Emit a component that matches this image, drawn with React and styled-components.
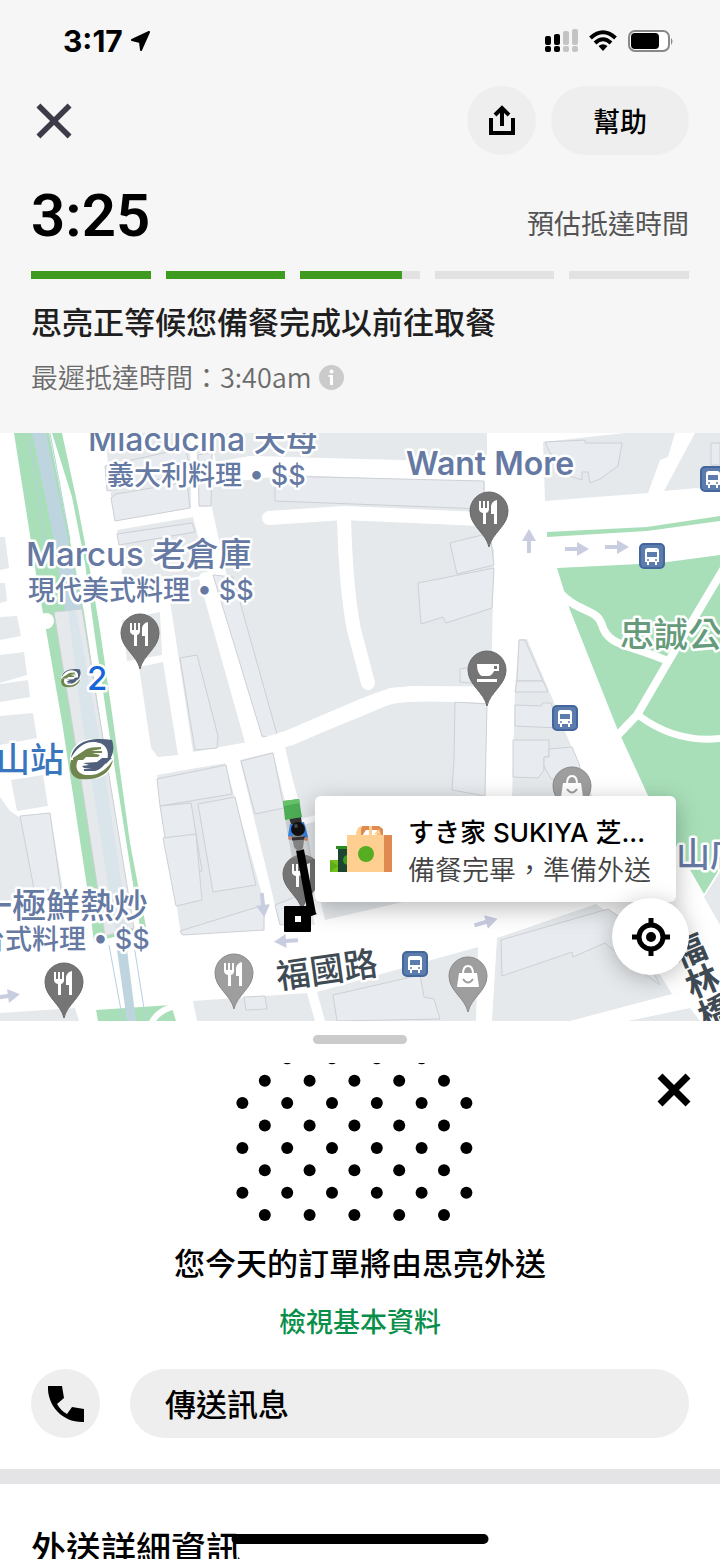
import React from "react";
import styled, { createGlobalStyle } from "styled-components";

const COLORS = {
  HEADER_BG: "#f6f6f6",
  PILL: "#eeeeee",
  TRACK: "#e2e2e2",
  PROGRESS: "#3d9b1f",
  LINK: "#0a8f4a",
  MUTED: "#6b6b6b",
  BLOCK: "#e5e9ec",
  BUILDING_LINE: "#cdd0d5",
  PARK: "#a8dfb8",
  RIVER: "#bed5df",
  PLACE: "#6579a3",
  ARROW: "#c9cde0"
};

const CJK = `"Noto Sans CJK TC", sans-serif`;
const LATIN = `Inter, "Noto Sans CJK TC", sans-serif`;

const GlobalStyle = createGlobalStyle`
  * {
    box-sizing: border-box;
  }

  body {
    margin: 0;
    background: #fff;
    font-family: ${CJK};
    color: #000;
  }

  h1, h2, p {
    margin: 0;
  }

  button {
    border: 0;
    padding: 0;
    font: inherit;
    color: inherit;
    cursor: pointer;
  }
`;

const Screen = styled.div`
  position: relative;
  display: flex;
  flex-direction: column;
  height: 100vh;
  overflow: hidden;
`;

const Header = styled.header`
  flex: none;
  padding: 0 31px 36px;
  background: ${COLORS.HEADER_BG};
`;

const StatusBar = styled.div`
  display: flex;
  justify-content: space-between;
  align-items: center;
  height: 82px;
  padding: 0 14px 0 32px;
`;

const StatusGroup = styled.div`
  display: flex;
  align-items: center;
  gap: ${props => props.$gap}px;
`;

const Clock = styled.span`
  font: 700 30px/32px ${LATIN};
`;

const Toolbar = styled.div`
  display: flex;
  align-items: center;
  gap: 15px;
  padding-top: 4px;
`;

const IconButton = styled.button`
  display: flex;
  align-items: center;
  justify-content: center;
  background: none;
`;

const CloseButton = styled(IconButton)`
  width: 46px;
  height: 46px;
  margin-right: auto;
`;

const RoundButton = styled(IconButton)`
  flex: none;
  width: 69px;
  height: 69px;
  border-radius: 50%;
  background: ${COLORS.PILL};
`;

const HelpButton = styled.button`
  height: 69px;
  padding: 0 42px;
  border-radius: 35px;
  background: ${COLORS.PILL};
  font-size: 27px;
  font-weight: 500;
`;

const EtaRow = styled.div`
  display: flex;
  justify-content: space-between;
  align-items: flex-end;
  padding: 28px 0 22px;
`;

const Eta = styled.h1`
  font: 600 60px/66px Roboto, sans-serif;
`;

const EtaLabel = styled.span`
  padding-bottom: 6px;
  font-size: 27px;
  line-height: 40px;
  color: #545454;
`;

const Steps = styled.div`
  display: flex;
  gap: 15px;
`;

const Step = styled.div`
  flex: 1;
  height: 8px;
  background: ${COLORS.TRACK};
`;

const StepFill = styled.div`
  height: 100%;
  background: ${COLORS.PROGRESS};
`;

const Headline = styled.h2`
  margin-top: 20px;
  font-size: 31px;
  line-height: 44px;
  font-weight: 500;
  color: #1f1f1f;
`;

const Latest = styled.p`
  display: flex;
  align-items: center;
  gap: 7px;
  margin-top: 14px;
  font-size: 27px;
  line-height: 40px;
  font-weight: 350;
  color: ${COLORS.MUTED};
`;

const MapArea = styled.section`
  position: relative;
  flex: none;
  aspect-ratio: 720 / 588;
  overflow: hidden;

  > svg {
    display: block;
    width: 100%;
    height: 100%;
  }
`;

const MapLabel = styled.text`
  font-family: ${LATIN};
  font-weight: ${props => props.$weight || 500};
  font-size: ${props => props.$size || 27}px;
  fill: ${props => props.$color || COLORS.PLACE};
  stroke: #fff;
  stroke-width: 5px;
  stroke-linejoin: round;
  paint-order: stroke;
  writing-mode: ${props => (props.$vertical ? "vertical-rl" : "horizontal-tb")};
`;

const StoreCard = styled.div`
  position: absolute;
  right: 44px;
  bottom: 119px;
  display: flex;
  align-items: center;
  gap: 16px;
  height: 106px;
  padding: 0 25px 0 15px;
  border-radius: 6px;
  background: #fff;
  box-shadow: 0 6px 24px rgba(0, 0, 0, 0.28);
`;

const StoreText = styled.div`
  padding-top: 3px;
`;

const StoreName = styled.h2`
  font: 500 26px/36px Inter, "Noto Sans CJK JP", sans-serif;
`;

const StoreStatus = styled.p`
  font-size: 27px;
  line-height: 36px;
  font-weight: 350;
  color: #444;
`;

const LocateButton = styled(IconButton)`
  position: absolute;
  right: 31px;
  bottom: 46px;
  width: 77px;
  height: 77px;
  border-radius: 50%;
  background: #fff;
  box-shadow: 0 4px 22px rgba(0, 0, 0, 0.25);
`;

const Sheet = styled.main`
  flex: 1;
  min-height: 0;
  overflow: hidden;
  background: #fff;
`;

const Handle = styled.div`
  width: 94px;
  height: 9px;
  margin: 14px auto 0;
  border-radius: 5px;
  background: #cbcbcb;
`;

const CourierTop = styled.div`
  display: grid;
  grid-template-columns: 1fr auto 1fr;
  align-items: start;
  margin-top: 19px;
  padding: 0 28px;
`;

const DismissButton = styled(IconButton)`
  grid-column: 3;
  justify-self: end;
  width: 36px;
  height: 36px;
  margin-top: 9px;
`;

const Dots = styled.svg`
  grid-column: 2;
  width: 248px;
  height: 159px;
`;

const CourierText = styled.div`
  display: flex;
  flex-direction: column;
  align-items: center;
  gap: 17px;
  padding-top: 18px;
`;

const CourierName = styled.h2`
  font-size: 31px;
  line-height: 44px;
  font-weight: 500;
`;

const ProfileLink = styled.a`
  font-size: 27px;
  line-height: 40px;
  font-weight: 500;
  color: ${COLORS.LINK};
  text-decoration: none;
`;

const Contact = styled.div`
  display: flex;
  gap: 30px;
  padding: 28px 31px 31px;
`;

const MessageButton = styled.button`
  flex: 1;
  height: 69px;
  padding: 0 35px 2px;
  border-radius: 35px;
  background: ${COLORS.PILL};
  font-size: 31px;
  font-weight: 500;
  text-align: left;
`;

const Details = styled.section`
  padding: 37px 31px;
  border-top: 15px solid #e4e4e6;

  h2 {
    font-size: 35px;
    line-height: 52px;
    font-weight: 500;
  }
`;

const HomeIndicator = styled.div`
  position: absolute;
  left: 50%;
  bottom: 15px;
  width: 257px;
  height: 10px;
  border-radius: 5px;
  background: #000;
  transform: translateX(-50%);
`;

const steps = [100, 100, 85, 0, 0];

const blocks = [
  "0,537 5,537 9,568 0,570",
  "0,583 5,583 7,601 0,603",
  "0,617 17,616 21,636 0,640",
  "0,655 24,652 27,675 0,683",
  "0,684 28,680 30,697 0,702",
  "0,716 33,713 37,738 0,745",
  "11,780 43,775 48,806 17,811",
  "0,797 10,811 19,817 50,813 63,890 33,893 0,905",
  "0,1013 75,1008 79,1021 0,1021",
  "105,433 190,433 191,508 115,521 111,496",
  "196,442 213,450 211,506 199,507",
  "117,530 193,517 208,575 150,585 124,588",
  "122,620 160,612 162,655 127,661",
  "139,667 163,662 178,755 158,757 151,748",
  "168,588 205,577 248,742 193,752",
  "157,775 225,763 265,905 264,930 181,935",
  "240,760 273,752 315,925 279,922",
  "285,747 360,717 393,703 427,701 486,703 484,800 484,880 403,902 325,920",
  "209,433 487,433 487,462 360,459 250,456 216,462",
  "207,485 290,475 485,482 484,530 494,550 491,687 413,686 390,688 360,699 285,731 262,738",
  "543,442 625,433 675,433 668,457 660,460 648,493 545,501",
  "695,433 720,433 720,486 664,491",
  "519,639 527,639 553,700 566,734 580,766 594,800 512,800 515,690",
  "704,897 720,872 720,925",
  "497,938 596,904 632,930 672,994 570,1021 492,1021",
  "317,992 478,947 476,1021 325,1021",
  "193,1001 307,993 315,1021 197,1021",
  "628,1021 690,1008 700,1021"
];

const buildings = [
  "111,498 116,494 187,482 190,508 115,521",
  "117,534 192,523 195,532 119,545",
  "105,466 186,448 190,472 107,491",
  "198,455 212,452 211,506 199,506",
  "275,476 484,481 484,509 275,501",
  "450,543 490,533 494,565 457,574",
  "418,583 494,568 492,608 446,623 443,617 421,624",
  "460,669 485,665 485,684 460,682",
  "455,702 487,704 485,796 452,790 454,760",
  "545,442 585,440 585,443 622,443 618,466 600,479 590,483 588,472 582,472 582,480 560,473",
  "711,443 720,443 720,465 711,465",
  "519,640 525,640 543,681 517,681",
  "517,681 543,681 548,692 515,692",
  "515,705 541,706 543,703 551,703 560,728 515,726",
  "513,740 549,740 549,757 544,757 544,770 538,778 513,777",
  "549,749 572,747 580,766 575,780 551,779 544,766 544,757 549,757",
  "180,658 197,655 218,736 217,748 195,750",
  "213,575 233,577 278,738 262,736",
  "157,779 226,765 232,794 160,806",
  "160,806 191,803 202,871 171,875",
  "198,804 235,797 256,885 213,892",
  "163,838 196,834 202,900 176,906",
  "180,931 264,905 264,930 183,935",
  "241,761 273,753 284,808 255,814",
  "275,905 305,893 309,920 280,925",
  "501,940 608,909 624,920 660,985 625,960 605,943 573,957 572,952 502,976",
  "333,995 420,975 424,997 434,999 440,1019 337,1021",
  "244,997 265,996 267,1009 246,1010",
  "20,816 50,813 61,890 34,889"
];

const pins = [
  { x: 489, y: 511, kind: "fork" },
  { x: 140, y: 633, kind: "fork" },
  { x: 487, y: 670, kind: "cup" },
  { x: 572, y: 786, kind: "bag", light: true },
  { x: 302, y: 874, kind: "fork" },
  { x: 64, y: 982, kind: "fork" },
  { x: 234, y: 973, kind: "fork", light: true },
  { x: 468, y: 976, kind: "bag", light: true }
];

const stops = [
  [652, 556],
  [565, 718],
  [415, 964],
  [713, 479]
];

const arrows = [
  [529, 541, -90],
  [577, 549, 0],
  [617, 547, 0],
  [8, 996, -8],
  [263, 905, 84],
  [286, 941, 176],
  [486, 922, -16]
];

const Cross = ({ size, color, width }) => (
  <svg width={size} height={size} viewBox="0 0 36 36" aria-hidden="true">
    <path d="M4 4L32 32M32 4L4 32" stroke={color} strokeWidth={width} />
  </svg>
);

const StatusIcons = () => (
  <svg width="130" height="26" viewBox="545 28 130 26" aria-hidden="true">
    <g>
      <rect x="545" y="36" width="6" height="9" rx="2" />
      <rect x="554" y="34" width="6" height="11" rx="2" />
      <rect x="545" y="46" width="6" height="6" rx="2" />
      <rect x="554" y="46" width="6" height="6" rx="2" />
    </g>
    <g fill="#c4c4c4">
      <rect x="563" y="31" width="6" height="14" rx="2" />
      <rect x="572" y="29" width="6" height="16" rx="2" />
      <rect x="563" y="46" width="6" height="6" rx="2" />
      <rect x="572" y="46" width="6" height="6" rx="2" />
    </g>
    <g fill="none" stroke="#000" strokeWidth="4">
      <path d="M590.5 38Q603 26.500 615.500 38" />
      <path d="M595 43Q603 35.500 611 43" />
    </g>
    <path d="M598.500 46Q603 42.500 607.500 46L603 51Z" />
    <rect x="629" y="31" width="40" height="20" rx="6" fill="#fff" stroke="#888" strokeWidth="2" />
    <rect x="631" y="33" width="28" height="16" rx="4" />
    <path d="M671 38Q674 41 671 45Z" fill="#888" />
  </svg>
);

const PinGlyph = ({ kind }) => {
  if (kind === "cup") {
    return (
      <g fill="#fff">
        <path d="M-10 -6H12V1H7Q5 6 1 6H-5Q-10 4 -10 -6Z" />
        <rect x="7" y="-4" width="3" height="3" fill="#757575" />
        <rect x="-10" y="9" width="20" height="3" />
      </g>
    );
  }
  if (kind === "bag") {
    return (
      <g>
        <path d="M-9 -3H9L11 11H-11Z" fill="#fff" />
        <path d="M-5 -2Q-5 -10 0 -10Q5 -10 5 -2" fill="none" stroke="#fff" strokeWidth="2" />
        <path d="M-5 3Q0 10 5 3" fill="none" stroke="#9e9e9e" strokeWidth="2" />
      </g>
    );
  }
  return (
    <g fill="#fff">
      <path d="M-10 -10H-8V-3H-6V-10H-4V-3H-2V-10H0V-2Q0 1 -3 2V13H-6V2Q-10 1 -10 -2Z" />
      <path d="M8 -11V13H5V3H2V-5Q3 -10 8 -11Z" />
    </g>
  );
};

const Pin = ({ x, y, kind, light }) => (
  <g transform={`translate(${x} ${y})`}>
    <path
      d="M0 36C-3 22 -19 15 -19 0A19 19 0 0 1 19 0C19 15 3 22 0 36Z"
      fill={light ? "#9e9e9e" : "#757575"}
      stroke={light ? "#8a8a8a" : "#696969"}
    />
    <PinGlyph kind={kind} />
  </g>
);

const BusStop = ({ x, y }) => (
  <g transform={`translate(${x} ${y})`}>
    <rect x="-12" y="-12" width="24" height="24" rx="4" fill="#5b7cad" stroke="#43669c" strokeWidth="2" />
    <path d="M-7 -5Q-7 -8 -4 -8H4Q7 -8 7 -5V6H5V9H3V6H-3V9H-5V6H-7Z" fill="#fff" />
    <path d="M-5 -4H5V1H-5Z" fill="#5b7cad" />
    <circle cx="-4" cy="4" r="1" fill="#5b7cad" />
    <circle cx="4" cy="4" r="1" fill="#5b7cad" />
  </g>
);

const MetroLogo = ({ transform }) => (
  <g transform={transform}>
    <ellipse rx="22" ry="20" fill="#fff" />
    <path d="M-21 -1C-19 -16 -3 -23 20 -19C23 -10 21 -2 14 5C19 -8 14 -17 1 -17C-9 -17 -16 -10 -21 -1Z" fill="#50607c" />
    <path d="M21 1C18 15 6 22 -12 20C-22 18 -23 9 -21 1H-14C-18 9 -14 16 -4 16C6 17 14 11 21 1Z" fill="#71854f" />
    <path d="M-19 -1L-7 -9Q-4 -12 9 -12V-10L-1 -8H10V-6H0L8 -4L6 -2H-6L-9 1H-19Z" fill="#71854f" />
    <path d="M20 -1L10 -1L5 3L-9 4L-3 6L-10 7L-8 9H0L-8 10V12H3Q8 11 12 6Z" fill="#50607c" />
  </g>
);

const Courier = () => (
  <g>
    <path d="M285 818L306 826L312 860L292 858Z" fill="#9aa0a5" opacity="0.4" />
    <path d="M300 850L303 866L312 914" stroke="#000" strokeWidth="8" fill="none" />
    <path d="M306 905L317 914L306 918Z" />
    <rect x="284" y="906" width="27" height="26" rx="1" />
    <rect x="295" y="916" width="6" height="6" fill="#fff" />
    <path d="M291 832H305L303 848Q299 854 294 847Z" fill="#858585" />
    <path d="M290 824L304 822L308 837L304 840L302 831L293 832L292 840L288 836Z" fill="#3182e8" />
    <path d="M292 839L305 838" stroke="#333" strokeWidth="3" />
    <circle cx="290" cy="838" r="2" fill="#c98c72" />
    <circle cx="306" cy="839" r="2" fill="#c98c72" />
    <path d="M289 818L301 817L302 824H291Z" fill="#333" />
    <path d="M283 801L299 799L302 817L285 820Z" fill="#4dad55" />
    <path d="M283 801L299 799L300 803L284 806Z" fill="#65c26b" />
    <circle cx="298" cy="829" r="7" fill="#111" />
    <circle cx="296" cy="826" r="2" fill="#444" />
  </g>
);

const CityMap = () => (
  <svg viewBox="0 433 720 588" preserveAspectRatio="xMidYMid slice">
    <rect y="433" width="720" height="588" fill="#fff" />
    <g fill={COLORS.BLOCK}>
      {blocks.map(points => <polygon key={points} points={points} />)}
    </g>
    <g fill="#e8ebef" stroke={COLORS.BUILDING_LINE}>
      {buildings.map(points => <polygon key={points} points={points} />)}
    </g>

    <g fill="none" stroke="#fff" strokeLinecap="round" strokeLinejoin="round">
      <path d="M269 518L344 513L480 519" strokeWidth="14" />
      <path d="M344 518Q346 590 354 630L368 683" strokeWidth="14" />
      <path d="M205 578L252 745" strokeWidth="12" />
      <path d="M298 823L320 817" strokeWidth="6" />
      <path d="M150 767L228 755L290 738L360 708Q385 695 410 694H490" strokeWidth="15" />
      <path d="M278 748L296 812" strokeWidth="11" />
    </g>

    <g fill={COLORS.PARK}>
      <path d="M14 433H49L84 612L104 745L134 932L94 942L87 887L62 722L46 630L37 580Z" />
      <path d="M52 433H62L78 507L90 570L100 630L113 720L130 843L146 927L140 927L128 853L108 725L95 637L85 563L72 497Z" />
      <path d="M96 1010L171 1005L176 1021H98Z" />
      <path d="M547 532L647 527L720 516V521L647 531L547 537Z" />
      <path d="M557 568L660 563L720 555V868L704 894L650 800L617 728L570 610Z" />
    </g>
    <path d="M32 433H46L64 520L82 610H65L54 540Z" fill={COLORS.RIVER} />
    <path d="M54 612L82 609L104 745L134 928L105 936L78 760Z" fill={COLORS.BLOCK} stroke={COLORS.BUILDING_LINE} />
    <path d="M68 611H76L100 740L128 928H115L82 720Z" fill="#d9e4eb" />
    <path d="M117 950L127 950L136 1021H127Z" fill={COLORS.RIVER} />
    <path
      d="M28 433L36 480L46 550M50 433L58 475L70 540M109 945L123 1021M134 945L146 1021"
      fill="none"
      stroke="#b6cfe0"
    />
    <circle cx="46" cy="621" r="8" fill="#fff" />

    <g fill="none" stroke="#fff" strokeWidth="8">
      <path d="M554 585C575 615 596 606 602 625C608 647 630 644 670 662" />
      <path d="M724 568L668 662L637 715L617 736" />
      <path d="M638 715C662 733 689 743 724 738" strokeWidth="7" />
      <path d="M150 1026C156 1011 169 1006 190 1003" strokeWidth="6" />
    </g>

    {arrows.map(([x, y, angle]) => (
      <path
        key={`${x}-${y}`}
        d="M-12 -2H0V-7L12 0L0 7V2H-12Z"
        fill={COLORS.ARROW}
        transform={`translate(${x} ${y}) rotate(${angle})`}
      />
    ))}
    {stops.map(([x, y]) => <BusStop key={x} x={x} y={y} />)}
    {pins.map(pin => <Pin key={pin.x} {...pin} />)}

    <MapLabel x="88" y="451" $size={32}>Miacucina 天母</MapLabel>
    <MapLabel x="107" y="485">義大利料理 • $$</MapLabel>
    <MapLabel x="406" y="475" $size={32} $weight={600}>Want More</MapLabel>
    <MapLabel x="26" y="566" $size={33}>Marcus 老倉庫</MapLabel>
    <MapLabel x="28" y="600">現代美式料理 • $$</MapLabel>
    <MapLabel x="87" y="690" $size={33} $color="#1765d8">2</MapLabel>
    <MapLabel x="-4" y="772" $size={34} $color="#3976bd">山站</MapLabel>
    <MapLabel x="-22" y="918" $size={34}>一極鮮熱炒</MapLabel>
    <MapLabel x="-22" y="949">台式料理 • $$</MapLabel>
    <MapLabel x="620" y="647" $size={34} $color="#659b7b">忠誠公</MapLabel>
    <MapLabel x="676" y="867" $size={34}>山店</MapLabel>
    <MapLabel $size={34} $color="#3f4b54" transform="translate(278 989) rotate(-8)">福國路</MapLabel>
    <MapLabel $size={33} $weight={700} $color="#3f4b54" $vertical transform="translate(681 936) rotate(-23)">
      福林橋
    </MapLabel>

    <MetroLogo transform="translate(92 759)" />
    <MetroLogo transform="translate(71 678) scale(0.45)" />
    <Courier />
  </svg>
);

const BagIcon = () => (
  <svg width="62" height="48" viewBox="330 825 62 48" aria-hidden="true">
    <path d="M330 860H345V872H330Z" fill="#78c21e" />
    <path d="M330 860L338 866L330 872Z" fill="#5fae17" />
    <path d="M336 846H352V849H350V872H338V849H336Z" fill="#1c4632" />
    <path d="M336 846H350V849H336Z" fill="#2d8c20" />
    <circle cx="348" cy="860" r="5" fill="#3a9b24" />
    <path d="M358 836L362 826H379L383 829V836H377V830H366L362 836Z" fill="#df8a51" />
    <path d="M356 835Q356 828 361 826V835ZM369 826H372V835H369ZM374 834L379 829L381 835Z" fill="#ffcf91" />
    <path d="M347 835H384V872H347Z" fill="#ffcf91" />
    <path d="M384 835H392V872H384Z" fill="#df8a51" />
    <circle cx="366" cy="854" r="8" fill="#57ad22" />
  </svg>
);

const dotRows = Array.from({ length: 8 }, (_, row) => row);

const DotPattern = () => (
  <Dots viewBox="236 1063 248 159" aria-hidden="true">
    {dotRows.map(row => {
      const wide = row % 2 === 0;
      // the top row is cut off at both ends
      const count = row === 0 ? 4 : wide ? 6 : 5;
      const start = row === 0 ? 287.2 : wide ? 242.4 : 264.8;
      return Array.from({ length: count }, (_, col) => (
        <circle key={`${row}-${col}`} cx={start + col * 44.8} cy={1058.3 + row * 22.4} r="6" />
      ));
    })}
  </Dots>
);

const App = () => (
  <Screen>
    <GlobalStyle />
    <Header>
      <StatusBar>
        <StatusGroup $gap={8}>
          <Clock>3:17</Clock>
          <svg width="20" height="20" viewBox="0 0 20 20" aria-hidden="true">
            <path d="M18 1L10 19L9 11L1 9Z" stroke="#000" strokeWidth="2" strokeLinejoin="round" />
          </svg>
        </StatusGroup>
        <StatusIcons />
      </StatusBar>
      <Toolbar>
        <CloseButton aria-label="關閉">
          <Cross size={40} color="#3d3b48" width={5} />
        </CloseButton>
        <RoundButton aria-label="分享">
          <svg width="28" height="34" viewBox="0 0 28 34" fill="none" stroke="#000" strokeWidth="4" aria-hidden="true">
            <path d="M3 14V29H25V14M14 22V4M7 11L14 4L21 11" />
          </svg>
        </RoundButton>
        <HelpButton>幫助</HelpButton>
      </Toolbar>
      <EtaRow>
        <Eta>3:25</Eta>
        <EtaLabel>預估抵達時間</EtaLabel>
      </EtaRow>
      <Steps>
        {steps.map((percent, i) => (
          <Step key={i}>
            <StepFill style={{ width: `${percent}%` }} />
          </Step>
        ))}
      </Steps>
      <Headline>思亮正等候您備餐完成以前往取餐</Headline>
      <Latest>
        最遲抵達時間：3:40am
        <svg width="25" height="25" viewBox="0 0 25 25" aria-hidden="true">
          <circle cx="12.5" cy="12.5" r="12.5" fill="#cbcbcb" />
          <circle cx="12.5" cy="6.500" r="2" fill="#fff" />
          <path d="M9.500 10H14V20H11V12H9.500Z" fill="#fff" />
        </svg>
      </Latest>
    </Header>

    <MapArea>
      <CityMap />
      <StoreCard>
        <BagIcon />
        <StoreText>
          <StoreName>すき家 SUKIYA 芝...</StoreName>
          <StoreStatus>備餐完畢，準備外送</StoreStatus>
        </StoreText>
      </StoreCard>
      <LocateButton aria-label="目前位置">
        <svg width="40" height="40" viewBox="0 0 40 40" aria-hidden="true">
          <circle cx="20" cy="20" r="12" fill="none" stroke="#000" strokeWidth="5" />
          <circle cx="20" cy="20" r="5" />
          <path d="M20 1V8M20 32V39M1 20H8M32 20H39" stroke="#000" strokeWidth="5" />
        </svg>
      </LocateButton>
    </MapArea>

    <Sheet>
      <Handle />
      <CourierTop>
        <DotPattern />
        <DismissButton aria-label="關閉外送員資訊">
          <Cross size={36} color="#000" width={7} />
        </DismissButton>
      </CourierTop>
      <CourierText>
        <CourierName>您今天的訂單將由思亮外送</CourierName>
        <ProfileLink href="#profile">檢視基本資料</ProfileLink>
      </CourierText>
      <Contact>
        <RoundButton aria-label="撥打電話">
          <svg width="38" height="38" viewBox="0 0 38 38" aria-hidden="true">
            <path d="M1 1H15L17 13L10 19Q14 26 20 29L25 22L37 24V37C16 38 0 21 1 1Z" />
          </svg>
        </RoundButton>
        <MessageButton>傳送訊息</MessageButton>
      </Contact>
      <Details>
        <h2>外送詳細資訊</h2>
      </Details>
    </Sheet>
    <HomeIndicator />
  </Screen>
);

export default App;
